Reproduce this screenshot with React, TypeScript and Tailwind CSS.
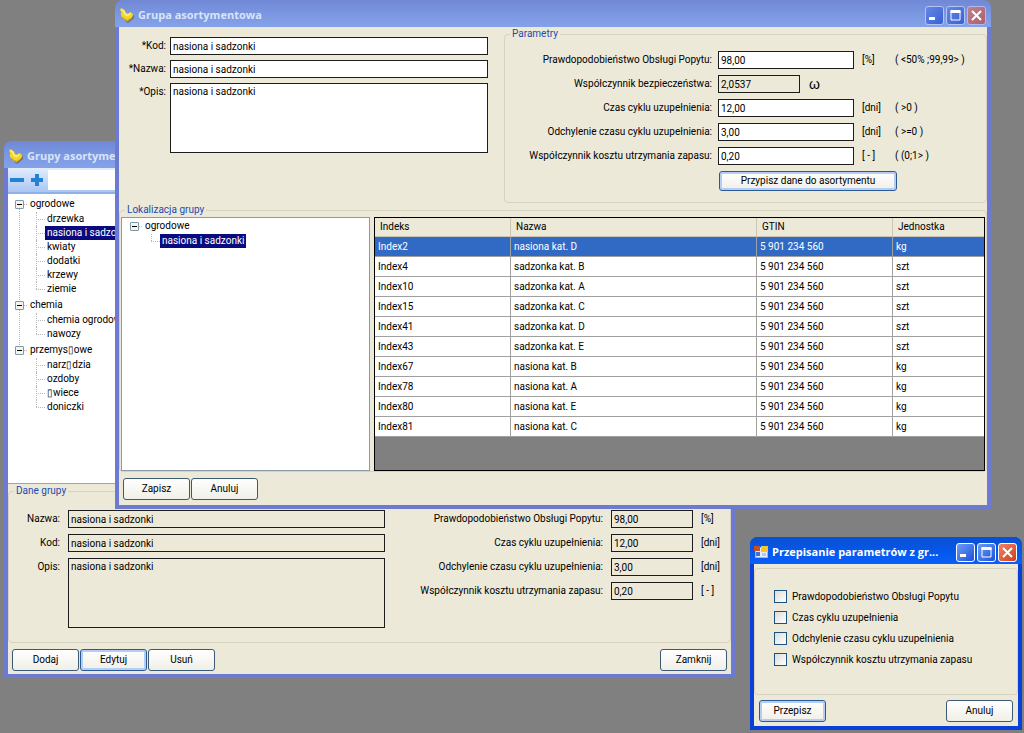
import { useState } from "react"
import type { ReactNode } from "react"
import clsx from "clsx"

const items = [
  { index: "Index2", name: "nasiona kat. D", unit: "kg" },
  { index: "Index4", name: "sadzonka kat. B", unit: "szt" },
  { index: "Index10", name: "sadzonka kat. A", unit: "szt" },
  { index: "Index15", name: "sadzonka kat. C", unit: "szt" },
  { index: "Index41", name: "sadzonka kat. D", unit: "szt" },
  { index: "Index43", name: "sadzonka kat. E", unit: "szt" },
  { index: "Index67", name: "nasiona kat. B", unit: "kg" },
  { index: "Index78", name: "nasiona kat. A", unit: "kg" },
  { index: "Index80", name: "nasiona kat. E", unit: "kg" },
  { index: "Index81", name: "nasiona kat. C", unit: "kg" },
]

const groups = [
  { name: "ogrodowe", children: ["drzewka", "nasiona i sadzonki", "kwiaty", "dodatki", "krzewy", "ziemie"] },
  { name: "chemia", children: ["chemia ogrodowa", "nawozy"] },
  { name: "przemys▯owe", children: ["narz▯dzia", "ozdoby", "▯wiece", "doniczki"] },
]

const params = [
  { id: "pop", label: "Prawdopodobieństwo Obsługi Popytu", value: "98,00", unit: "[%]", range: "( <50% ;99,99> )" },
  { id: "safety", label: "Współczynnik bezpieczeństwa", value: "2,0537", unit: "ω", range: "", readOnly: true },
  { id: "cycle", label: "Czas cyklu uzupełnienia", value: "12,00", unit: "[dni]", range: "( >0 )" },
  { id: "deviation", label: "Odchylenie czasu cyklu uzupełnienia", value: "3,00", unit: "[dni]", range: "( >=0 )" },
  { id: "cost", label: "Współczynnik kosztu utrzymania zapasu", value: "0,20", unit: "[ - ]", range: "( (0;1> )" },
]
const groupParams = params.filter(p => !p.readOnly)

function DuckIcon() {
  return (
    <svg width="16" height="16" viewBox="0 0 16 16" className="shrink-0" aria-hidden="true">
      <path d="M3 11 8 15.500 10 15.500 15 11 15 8z" fill="#5f5a3c" opacity="0.6" />
      <path d="M1.500 1.500 3 1.200 6 3.500 7 6 9 6.500 11.500 5 13.500 6.500 14 9 11 12.500 8.500 14.200 5.500 13 3 10.500 1.800 7.500 2.200 5 1.200 3.500z" fill="#f4d624" />
      <path d="M2.500 2.500 5 4.500 6 7.500 8.500 8.500 11.500 6.500" fill="none" stroke="#fdf08c" strokeWidth="1.500" />
      <path d="M3.500 10 6 12.500 8.500 13.300 11 11.800" fill="none" stroke="#c99a18" strokeWidth="1" />
    </svg>
  )
}

function FormIcon() {
  return (
    <svg width="15" height="14" viewBox="0 0 15 14" className="shrink-0" aria-hidden="true">
      <rect x="1.500" y="2.500" width="12" height="10" fill="#e6eaf6" stroke="#a9b3cc" />
      <rect x="0" y="1" width="6" height="5" fill="#c8501e" />
      <rect x="7" y="1" width="7" height="6" fill="#f6c52b" />
      <rect x="2" y="7" width="4" height="4" fill="#3a74d8" />
      <rect x="8" y="8" width="4" height="3" fill="#b9c6e4" />
    </svg>
  )
}

function CaptionButtons({ active }: { active?: boolean }) {
  const base = "flex size-[19px] items-center justify-center rounded-[3px] border"
  const blue = active
    ? "border-white bg-linear-to-br from-[#6f9bf5] to-[#1b4fd8]"
    : "border-[#b3c4f3] bg-linear-to-br from-[#6488e6] to-[#3a60d4]"
  return (
    <div className="flex shrink-0 gap-[2px]">
      <button type="button" aria-label="Minimalizuj" className={clsx(base, blue)}>
        <svg width="13" height="13" viewBox="0 0 13 13"><rect x="1" y="8" width="6" height="3" fill="#fff" /></svg>
      </button>
      <button type="button" aria-label="Maksymalizuj" className={clsx(base, blue)}>
        <svg width="13" height="13" viewBox="0 0 13 13">
          <path d="M2 2v9h9v-9" fill="none" stroke="#fff" />
          <rect x="1.500" y="1" width="10" height="3" fill="#fff" />
        </svg>
      </button>
      <button
        type="button"
        aria-label="Zamknij okno"
        className={clsx(base, active ? "border-white bg-linear-to-br from-[#ee8363] to-[#d33a10]" : "border-[#b3b8ea] bg-linear-to-br from-[#bb8290] to-[#ad5f6c]")}
      >
        <svg width="13" height="13" viewBox="0 0 13 13"><path d="M2 2l9 9M11 2l-9 9" stroke="#fff" strokeWidth="2" /></svg>
      </button>
    </div>
  )
}

function AppWindow({ title, icon, active, className, children }: { title: string, icon: ReactNode, active?: boolean, className: string, children: ReactNode }) {
  return (
    <section
      className={clsx(
        "absolute flex flex-col rounded-t-lg border-x-4 border-b-4",
        active ? "border-[#0a3fd8] bg-[#0a3fd8]" : "border-[#6d7ad2] bg-[#6d7ad2]",
        className,
      )}
    >
      <header
        className={clsx(
          "-mx-1 flex h-[27px] items-center gap-[3px] rounded-t-lg pt-[3px] pr-[5px] pl-1",
          active
            ? "bg-linear-to-b from-[#0a4fd0] via-[#0557ea] to-[#0a5ff8] text-white"
            : "bg-linear-to-b from-[#7088d6] via-[#7b97e1] to-[#84a2ea] text-[#d8e4f8]",
        )}
      >
        {icon}
        <h1 className="min-w-0 flex-1 font-['Open_Sans'] text-[11px] leading-4 font-bold whitespace-nowrap">{title}</h1>
        <CaptionButtons active={active} />
      </header>
      <div className="flex flex-1 flex-col bg-[#ece9d8]">{children}</div>
    </section>
  )
}

function XpButton({ children, focused, className }: { children: ReactNode, focused?: boolean, className?: string }) {
  return (
    <button
      type="button"
      className={clsx(
        "rounded-[3px] border bg-linear-to-b from-white to-[#f0efe7] leading-[14px]",
        focused ? "border-[#2a5a94] inset-ring-2 inset-ring-[#b5cdf4]" : "border-[#3c5a74]",
        className ?? "h-[22px] w-[67px]",
      )}
    >
      {children}
    </button>
  )
}

const box = "h-[18px] border border-[#1c1c1c] px-[2px] leading-[14px] outline-none"

function TextRow({ id, label, readOnly, area }: { id: string, label: string, readOnly?: boolean, area?: boolean }) {
  const bg = readOnly ? "bg-[#ece9d8]" : "bg-white"
  return (
    <>
      <label htmlFor={id} className="text-right leading-[18px]">{label}:</label>
      {area
        ? <textarea id={id} defaultValue="nasiona i sadzonki" readOnly={readOnly} className={clsx("h-[70px] resize-none border border-[#1c1c1c] px-[2px] py-px leading-[14px] outline-none", bg)} />
        : <input id={id} type="text" defaultValue="nasiona i sadzonki" readOnly={readOnly} className={clsx(box, "min-w-0", bg)} />}
    </>
  )
}

function Group({ title, className, children }: { title: string, className?: string, children: ReactNode }) {
  return (
    <fieldset className={clsx("min-w-0 rounded-[4px] border border-[#d5d2c0]", className)}>
      <legend className="ml-[5px] px-[2px] leading-[14px] text-[#1c4bb0]">{title}</legend>
      {children}
    </fieldset>
  )
}

function TreeGroup({ name, nodes, selected, last }: { name: string, nodes: string[], selected: string, last?: boolean }) {
  return (
    <li className="relative">
      {!last && <span className="absolute top-[12px] -bottom-[4px] left-[4px] border-l border-dotted border-[#b8b8b8]" />}
      <div className="flex h-[14px] items-center">
        <button type="button" aria-label={"Zwiń " + name} className="flex size-[9px] items-center justify-center rounded-[1px] border border-[#7d99aa] bg-[#f4f3ee]">
          <span className="h-px w-[5px] bg-black" />
        </button>
        <span className="w-[3px] border-t border-dotted border-[#b8b8b8]" />
        <span className="px-[3px] leading-[14px]">{name}</span>
      </div>
      <ul className="mt-px mb-[2px] ml-[21px]">
        {nodes.map((node, i) => (
          <li key={node} className="relative flex h-[14px] items-center whitespace-nowrap">
            <span className={clsx("absolute top-0 left-0 border-l border-dotted border-[#b8b8b8]", i === nodes.length - 1 ? "h-[7px]" : "h-[14px]")} />
            <span className="w-[9px] shrink-0 border-t border-dotted border-[#b8b8b8]" />
            <span className={clsx("px-[2px] leading-[14px]", node === selected && "bg-[#0a0a80] text-white")}>{node}</span>
          </li>
        ))}
      </ul>
    </li>
  )
}

function GroupsWindow() {
  return (
    <AppWindow title="Grupy asortymentowe" icon={<DuckIcon />} className="top-[141px] right-[289px] left-1">
      <div className="flex h-[26px] items-center gap-[6px] border-b-2 border-[#8fb0e8] bg-linear-to-b from-[#e3edfd] to-[#a9c6f4] pl-[2px]">
        <button type="button" aria-label="Usuń pozycję">
          <svg width="14" height="14" viewBox="0 0 14 14"><rect x="0" y="5" width="14" height="4" fill="#2482d0" /></svg>
        </button>
        <button type="button" aria-label="Dodaj pozycję">
          <svg width="14" height="14" viewBox="0 0 14 14"><path d="M5 1h4v4h4v4H9v4H5V9H1V5h4z" fill="#2482d0" /></svg>
        </button>
        <input type="text" aria-label="Szukaj" className="-ml-[2px] h-[20px] w-[160px] bg-white px-1 outline-none" />
      </div>
      <ul className="h-[290px] border-b border-[#a5a596] bg-white pt-[3px] pl-[7px]">
        {groups.map((g, i) => (
          <TreeGroup key={g.name} name={g.name} nodes={g.children} selected="nasiona i sadzonki" last={i === groups.length - 1} />
        ))}
      </ul>
      <Group title="Dane grupy">
        <div className="flex items-start pt-[12px] pb-[14px]">
          <div className="grid flex-1 grid-cols-[51px_1fr] gap-x-2 gap-y-[6px]">
            <TextRow id="g-name" label="Nazwa" readOnly />
            <TextRow id="g-code" label="Kod" readOnly />
            <TextRow id="g-desc" label="Opis" readOnly area />
          </div>
          <div className="ml-[9px] grid w-[336px] grid-cols-[217px_82px_1fr] gap-y-[6px]">
            {groupParams.map(p => (
              <div key={p.id} className="col-span-3 grid grid-cols-subgrid items-center">
                <label htmlFor={"g-" + p.id} className="pr-2 text-right">{p.label}:</label>
                <input id={"g-" + p.id} type="text" readOnly defaultValue={p.value} className={clsx(box, "bg-[#ece9d8]")} />
                <span className="pl-2">{p.unit}</span>
              </div>
            ))}
          </div>
        </div>
      </Group>
      <div className="flex gap-px px-[4px] pt-[6px] pb-[3px]">
        <XpButton>Dodaj</XpButton>
        <XpButton focused>Edytuj</XpButton>
        <XpButton>Usuń</XpButton>
        <XpButton className="ml-auto h-[22px] w-[67px]">Zamknij</XpButton>
      </div>
    </AppWindow>
  )
}

function GroupEditWindow() {
  const [selected, setSelected] = useState("Index2")
  return (
    <AppWindow title="Grupa asortymentowa" icon={<DuckIcon />} className="top-0 right-[33px] left-[115px]">
      <div className="flex items-start gap-4">
        <div className="grid flex-1 grid-cols-[47px_1fr] gap-x-1 gap-y-[5px] pt-[10px]">
          <TextRow id="e-code" label="*Kod" />
          <TextRow id="e-name" label="*Nazwa" />
          <TextRow id="e-desc" label="*Opis" area />
        </div>
        <Group title="Parametry" className="w-[483px]">
          <div className="grid grid-cols-[213px_136px_33px_1fr] gap-y-[6px] pt-[10px] pb-[11px]">
            {params.map(p => (
              <div key={p.id} className="col-span-4 grid grid-cols-subgrid items-center">
                <label htmlFor={"e-" + p.id} className="pr-[6px] text-right">{p.label}:</label>
                <div className={clsx("flex items-center", p.readOnly && "col-span-3")}>
                  <input id={"e-" + p.id} type="text" readOnly={p.readOnly} defaultValue={p.value} className={clsx(box, p.readOnly ? "w-[82px] bg-[#ece9d8]" : "w-full bg-white")} />
                  {p.readOnly && <span className="pl-[9px] font-['Liberation_Sans'] text-[14px] leading-[14px]">{p.unit}</span>}
                </div>
                {!p.readOnly && <span className="pl-2">{p.unit}</span>}
                {!p.readOnly && <span className="pl-2 whitespace-pre">{p.range}</span>}
              </div>
            ))}
            <XpButton focused className="col-span-3 col-start-2 ml-px h-[20px] w-[178px]">Przypisz dane do asortymentu</XpButton>
          </div>
        </Group>
      </div>
      <Group title="Lokalizacja grupy">
        <div className="flex h-[254px] gap-1 px-px">
          <ul className="w-[249px] shrink-0 border border-[#8b9aa8] bg-white pt-px pl-[8px]">
            <TreeGroup name="ogrodowe" nodes={["nasiona i sadzonki"]} selected="nasiona i sadzonki" last />
          </ul>
          <div className="min-w-0 flex-1 overflow-hidden border border-black bg-[#808080]">
            <table className="w-full table-fixed border-separate border-spacing-0 text-left">
              <colgroup>
                <col className="w-[136px]" />
                <col />
                <col className="w-[136px]" />
                <col className="w-[91px]" />
              </colgroup>
              <thead>
                <tr className="bg-[#ece9d8]">
                  {["Indeks", "Nazwa", "GTIN", "Jednostka"].map(h => (
                    <th key={h} className="border-r border-b border-[#c9c6b4] px-[5px] leading-[18px] font-normal last:border-r-0">{h}</th>
                  ))}
                </tr>
              </thead>
              <tbody>
                {items.map(item => (
                  <tr
                    key={item.index}
                    onClick={() => setSelected(item.index)}
                    className={clsx("h-[20px]", item.index === selected ? "bg-[#316ac5] text-white" : "bg-white")}
                  >
                    {[item.index, item.name, "5 901 234 560", item.unit].map((cell, i) => (
                      <td key={i} className="border-r border-b border-[#a0a0a0] px-[3px] leading-[19px] last:border-r-0">{cell}</td>
                    ))}
                  </tr>
                ))}
              </tbody>
            </table>
          </div>
        </div>
      </Group>
      <div className="flex gap-px px-[4px] pt-[6px] pb-[5px]">
        <XpButton>Zapisz</XpButton>
        <XpButton>Anuluj</XpButton>
      </div>
    </AppWindow>
  )
}

function AssignDialog() {
  return (
    <AppWindow title="Przepisanie parametrów z gr..." icon={<FormIcon />} active className="top-[537px] right-[2px] w-[272px]">
      <fieldset className="mt-[4px] rounded-[4px] border border-[#d5d2c0] pt-[17px] pb-[24px] pl-[19px]">
        {groupParams.map(p => (
          <label key={p.id} className="flex h-[21px] items-center gap-[5px]">
            <input type="checkbox" className="size-[13px] appearance-none border border-[#1c5180] bg-linear-to-br from-[#dcdcd7] to-white checked:bg-[#316ac5]" />
            {p.label}
          </label>
        ))}
      </fieldset>
      <div className="flex justify-between px-[5px] pt-[5px] pb-[4px]">
        <XpButton focused>Przepisz</XpButton>
        <XpButton>Anuluj</XpButton>
      </div>
    </AppWindow>
  )
}

export default function App() {
  return (
    <main className="relative min-h-screen overflow-hidden bg-[#808080] font-['Roboto','Liberation_Sans',sans-serif] text-[10px] leading-[14px] text-black">
      <GroupsWindow />
      <GroupEditWindow />
      <AssignDialog />
    </main>
  )
}
